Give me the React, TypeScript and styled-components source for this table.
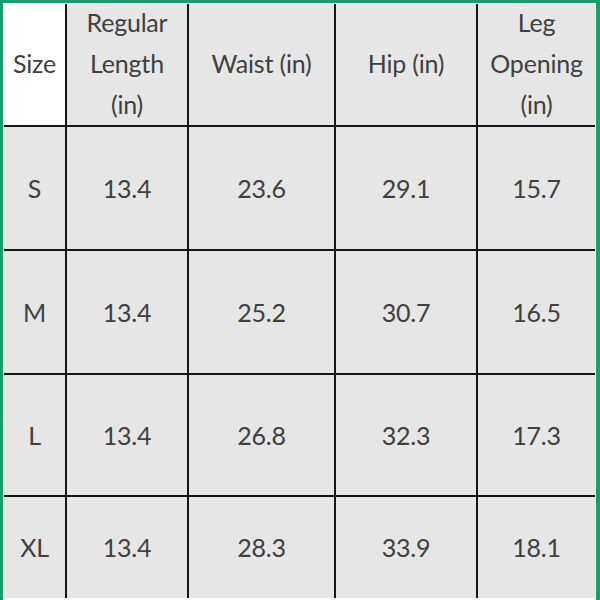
import React from "react";
import styled, { createGlobalStyle } from "styled-components";

const GlobalStyle = createGlobalStyle`
  html, body {
    margin: 0;
    padding: 0;
    background: #ffffff;
  }
`;

const Frame = styled.div`
  width: 600px;
  height: 600px;
  box-sizing: border-box;
  overflow: hidden;
  border-top: 3px solid #179e6d;
  border-left: 3px solid #179e6d;
  border-right: 4px solid #179e6d;
  padding: 1px 1px 0 1px;
  background: #ffffff;
`;

const Table = styled.div`
  display: grid;
  grid-template-columns: 61px 120px 145px 140px 117px;
  grid-template-rows: 121px 122px 122px 120px 101px;
  gap: 2px;
  background: #161616;
`;

const Cell = styled.div<{ $white?: boolean }>`
  display: flex;
  align-items: center;
  justify-content: center;
  text-align: center;
  background: ${(p) => (p.$white ? "#ffffff" : "#e6e6e6")};
  color: #404040;
  font-family: Lato, "Open Sans", sans-serif;
  font-size: 25px;
  line-height: 41px;
  letter-spacing: -0.2px;
`;

const HeaderLines = styled.div`
  margin-top: -3px;
`;

const headers: string[][] = [
  ["Size"],
  ["Regular", "Length", "(in)"],
  ["Waist (in)"],
  ["Hip (in)"],
  ["Leg", "Opening", "(in)"],
];

const rows: string[][] = [
  ["S", "13.4", "23.6", "29.1", "15.7"],
  ["M", "13.4", "25.2", "30.7", "16.5"],
  ["L", "13.4", "26.8", "32.3", "17.3"],
  ["XL", "13.4", "28.3", "33.9", "18.1"],
];

export default function App() {
  return (
    <>
      <GlobalStyle />
      <Frame>
        <Table>
          {headers.map((lines, i) => (
            <Cell key={`h${i}`} $white={i === 0}>
              <HeaderLines>
                {lines.map((l, j) => (
                  <div key={j}>{l}</div>
                ))}
              </HeaderLines>
            </Cell>
          ))}
          {rows.map((row, r) =>
            row.map((v, c) => <Cell key={`${r}-${c}`}>{v}</Cell>)
          )}
        </Table>
      </Frame>
    </>
  );
}
